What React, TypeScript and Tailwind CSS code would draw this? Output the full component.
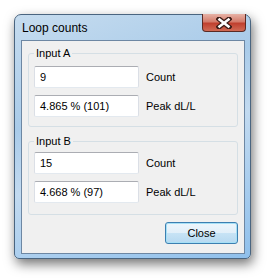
import { FC } from 'react'

const font = { fontFamily: '"Liberation Sans", Arial, sans-serif' }

const Field: FC<{ value: string; label: string; className?: string }> = ({ value, label, className }) => {
  return (
    <div className={`flex items-center ${className ?? ''}`}>
      <div className="w-[105px] h-[22px] bg-white border border-[#abadb3] border-b-[#e3e9ef] border-x-[#dbdfe6] rounded-[2px] flex items-center px-[5px] text-[11px] text-black">
        {value}
      </div>
      <span className="ml-[7px] text-[11px] text-black">{label}</span>
    </div>
  )
}

const Group: FC<{ title: string; count: string; peak: string; className?: string; pad: string }> = ({
  title,
  count,
  peak,
  className,
  pad,
}) => {
  return (
    <div className={`relative mx-[6px] border border-[#d5dfe5] rounded-[3px] px-[5px] ${pad} ${className ?? ''}`}>
      <span className="absolute -top-[7px] left-[5px] bg-[#f0f0f0] px-[2px] text-[11px] leading-[13px] text-black">
        {title}
      </span>
      <Field value={count} label="Count" />
      <Field value={peak} label="Peak dL/L" className="mt-[7px]" />
    </div>
  )
}

const App: FC = () => {
  return (
    <div className="w-[269px] h-[278px] bg-white pt-[14px] pl-[14px]" style={font}>
      <div className="relative w-[237px] h-[245px] rounded-t-[7px] rounded-b-[5px] border border-[#4a6580] bg-[linear-gradient(160deg,#c6dcef_0%,#a9cbe9_35%,#c2daf0_55%,#8fc0ec_100%)] shadow-[2px_5px_12px_rgba(0,0,0,0.55)] flex flex-col">
        {/* title */}
        <div className="h-[25px] flex items-center pl-[7px] text-[12px] text-black">Loop counts</div>
        <button className="absolute top-[-1px] right-[4px] w-[44px] h-[18px] rounded-b-[4px] border border-[#5a2a24] border-t-0 bg-[linear-gradient(to_bottom,#e7b2a6_0%,#d47c6c_45%,#c0402f_55%,#d06a55_100%)] flex items-center justify-center">
          <svg width="16" height="12" viewBox="0 0 16 12">
            <path d="M3 2 L13 10 M13 2 L3 10" stroke="#3a1a16" strokeWidth="5" strokeLinecap="square" />
            <path d="M3.5 2.5 L12.5 9.5 M12.5 2.5 L3.5 9.5" stroke="#ffffff" strokeWidth="2.6" strokeLinecap="square" />
          </svg>
        </button>
        {/* client */}
        <div className="mx-[6px] w-[224px] h-[214px] border border-[#6d87a3] bg-[#f0f0f0] flex flex-col">
          <Group title="Input A" count="9" peak="4.865 % (101)" pad="pt-[12px] pb-[9px]" className="mt-[12px]" />
          <Group title="Input B" count="15" peak="4.668 % (97)" pad="pt-[10px] pb-[11px]" className="mt-[14px]" />
          <div className="flex justify-end pr-[6px] mt-[7px]">
            <button className="w-[73px] h-[22px] rounded-[3px] border border-[#3c7fb1] bg-[linear-gradient(to_bottom,#edf6fc_0%,#e1eff9_50%,#c7e3f5_51%,#b6d9f1_100%)] shadow-[inset_0_0_0_1px_#a6e0f6] text-[11px] text-black">
              Close
            </button>
          </div>
        </div>
      </div>
    </div>
  )
}

export default App
